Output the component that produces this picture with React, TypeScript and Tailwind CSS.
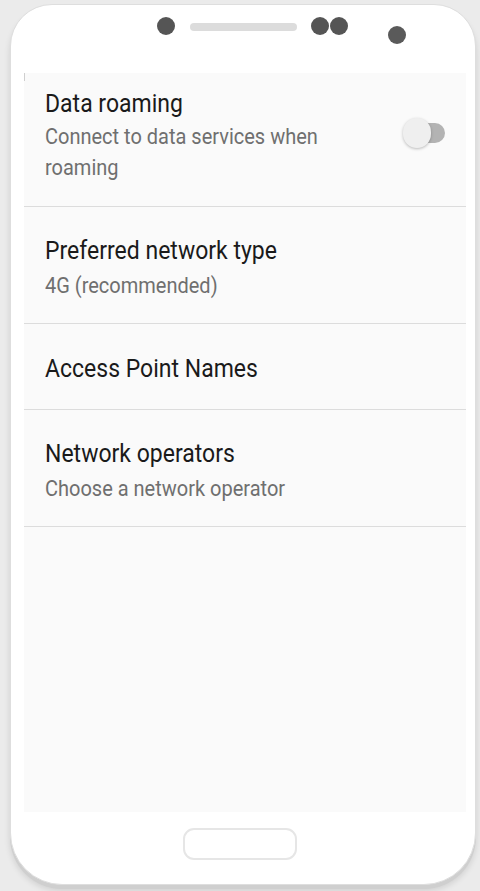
import React from "react";

function Row({
  title,
  subtitle,
  pt,
  pb,
  children,
}: {
  title: string;
  subtitle?: React.ReactNode;
  pt: string;
  pb: string;
  children?: React.ReactNode;
}) {
  return (
    <div className={`flex items-start border-b border-[#dcdcdc] pl-[21px] pr-[20px] ${pt} ${pb}`}>
      <div className="flex-1">
        <div className="text-[23px] leading-[30px] text-[#1a1a1a] scale-y-[1.1] origin-center">{title}</div>
        {subtitle && (
          <div className="mt-[5px] text-[20px] leading-[28px] text-[#6f6f6f] scale-y-[1.1] origin-center">
            {subtitle}
          </div>
        )}
      </div>
      {children}
    </div>
  );
}

export default function App() {
  return (
    <div
      className="w-[480px] h-[891px] bg-[#ebebeb] pt-[4px] overflow-hidden"
      style={{ fontFamily: "Roboto, 'Noto Sans', sans-serif" }}
    >
      <div className="ml-[10px] w-[466px] h-[881px] rounded-t-[42px] rounded-b-[52px] bg-white border border-[#dedede] shadow-[0_4px_0_#cfcfcf,0_6px_6px_rgba(0,0,0,0.12)] flex flex-col items-start">
        {/* top sensors */}
        <div className="flex items-start h-[68px] pt-[12px] ml-[146px]">
          <div className="w-[18px] h-[18px] rounded-full bg-[#555]" />
          <div className="ml-[15px] mt-[6px] w-[107px] h-[8px] rounded-full bg-[#dcdcdc]" />
          <div className="ml-[14px] w-[18px] h-[18px] rounded-full bg-[#555]" />
          <div className="ml-[1px] w-[18px] h-[18px] rounded-full bg-[#555]" />
          <div className="ml-[40px] mt-[9px] w-[18px] h-[18px] rounded-full bg-[#5a5a5a]" />
        </div>
        {/* screen */}
        <div className="w-[442px] h-[739px] bg-[#fafafa] ml-[13px] relative">
          <div className="absolute left-0 top-0 w-[1px] h-[8px] bg-[#cfcfcf]" />
          <Row
            title="Data roaming"
            subtitle={
              <>
                Connect to data services when
                <br />
                roaming
              </>
            }
            pt="pt-[16px]"
            pb="pb-[26px]"
          >
            <div className="relative w-[42px] h-[30px] mt-[29px] mr-[1px]">
              <div className="absolute right-0 top-[5px] w-[36px] h-[20px] rounded-full bg-[#b3b3b3]" />
              <div className="absolute left-0 top-0 w-[28px] h-[30px] rounded-full bg-[#efefef] shadow-[0_1px_3px_rgba(0,0,0,0.25)]" />
            </div>
          </Row>
          <Row title="Preferred network type" subtitle="4G (recommended)" pt="pt-[29px]" pb="pb-[24px]" />
          <Row title="Access Point Names" pt="pt-[30px]" pb="pb-[25px]" />
          <Row title="Network operators" subtitle="Choose a network operator" pt="pt-[29px]" pb="pb-[24px]" />
        </div>
        {/* home button */}
        <div className="mt-[16px] ml-[172px] w-[114px] h-[32px] rounded-[11px] border-2 border-[#e6e6e6]" />
      </div>
    </div>
  );
}
